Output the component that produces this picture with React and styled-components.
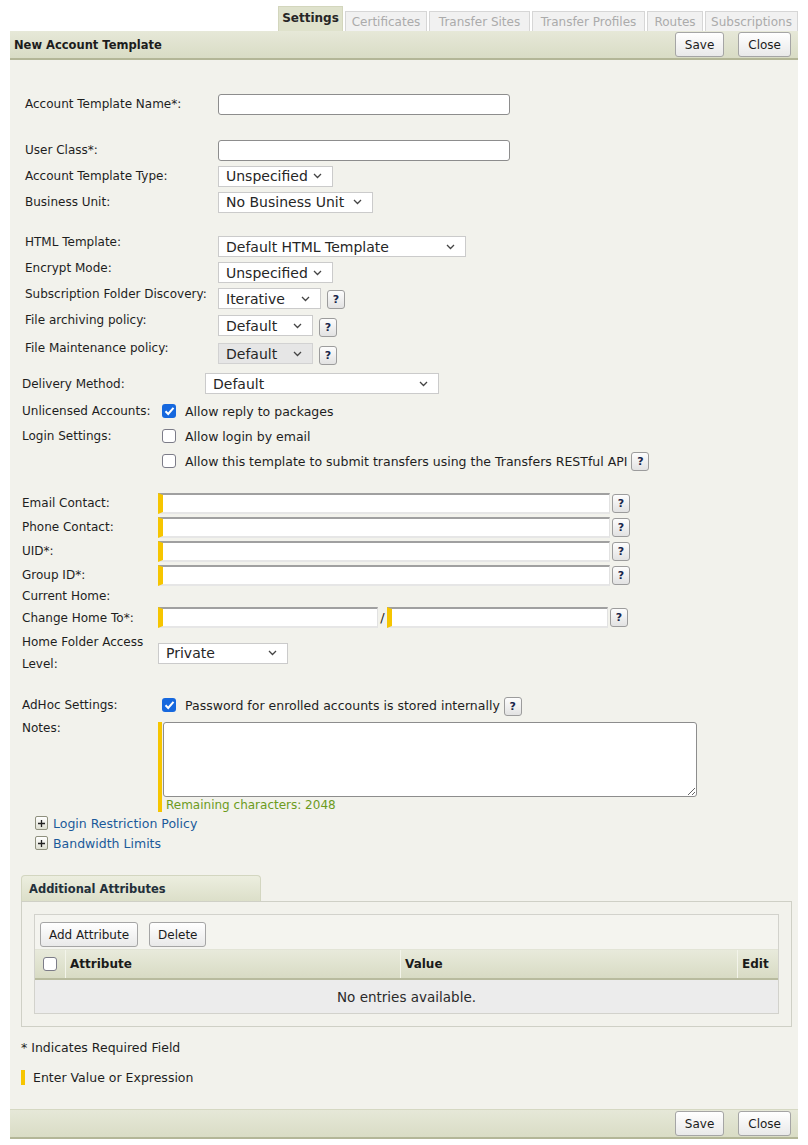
import React from 'react'
import styled, { createGlobalStyle } from 'styled-components'

const GlobalStyle = createGlobalStyle`
  body {
    margin: 0;
    background: #ffffff;
    font-family: "DejaVu Sans", Verdana, sans-serif;
    font-size: 12px;
    color: #1e1e1e;
  }
`

// Shell
const Shell = styled.div`
  width: 788px;
  margin-left: 10px;
`

const TabStrip = styled.div`
  display: flex;
  justify-content: flex-end;
  align-items: flex-end;
  gap: 2px;
  height: 31px;
  padding-top: 6px;
  box-sizing: border-box;
`

const Tab = styled.div`
  box-sizing: border-box;
  display: flex;
  align-items: center;
  justify-content: center;
  width: ${p => p.$w}px;
  height: ${p => (p.$active ? 25 : 20)}px;
  padding-bottom: ${p => (p.$active ? 3 : 0)}px;
  font-size: 12px;
  font-weight: ${p => (p.$active ? 'bold' : 'normal')};
  color: ${p => (p.$active ? '#262626' : '#ababab')};
  background: ${p => (p.$active ? '#dfe2cc' : '#f1f1f1')};
  border: 1px solid ${p => (p.$active ? '#d3d6bd' : '#d6d6d6')};
  border-bottom: none;
  white-space: nowrap;
`

const Sheet = styled.div`
  background: #f2f2ec;
`

const Bar = styled.div`
  display: flex;
  align-items: center;
  height: 27px;
  padding: 0 7px 0 4px;
  background: linear-gradient(#e6e8d8, #d9dcc5);
  border-bottom: 2px solid #b3b697;
  border-top: ${p => (p.$bottom ? '1px solid #d5d8c2' : 'none')};
`

const BarTitle = styled.div`
  flex: 1;
  font-weight: bold;
  font-size: 11.5px;
  color: #1c1c1c;
`

const Button = styled.button`
  height: 25px;
  padding: 0 ${p => p.$pad ?? 9}px;
  margin-left: ${p => p.$gap ?? 0}px;
  font-family: "DejaVu Sans", Verdana, sans-serif;
  font-size: 12px;
  color: #1c1c1c;
  background: linear-gradient(#ffffff, #e9e9e9);
  border: 1px solid #a5a5a5;
  border-radius: 3px;
`

// Form
const Form = styled.div`
  padding: 31px 0 0;
`

const Section = styled.div`
  padding-left: ${p => p.$left}px;
  margin-top: ${p => p.$top ?? 0}px;
`

const Row = styled.div`
  display: grid;
  grid-template-columns: ${p => p.$label}px auto;
  align-items: ${p => p.$align || 'center'};
  height: ${p => p.$h ?? 26}px;
  margin-top: ${p => p.$mt ?? 0}px;
`

const Label = styled.div`
  line-height: ${p => p.$lh ?? 16}px;
  white-space: nowrap;
`

const Controls = styled.div`
  display: flex;
  align-items: center;
  gap: ${p => p.$gap ?? 6}px;
  margin-top: ${p => p.$mt ?? 0}px;
`

const TextInput = styled.div`
  width: ${p => p.$w}px;
  height: 21px;
  box-sizing: border-box;
  background: #fff;
  border: 1px solid #8d8d8d;
  border-radius: 3px;
`

const ExprInput = styled.div`
  width: ${p => p.$w}px;
  height: 21px;
  box-sizing: border-box;
  background: #fff;
  border-left: 5px solid #f6c500;
  border-top: 2px solid #a0a0a0;
  border-right: 1px solid #e2e2e2;
  border-bottom: 2px solid #e6e6e6;
`

const SelectBox = styled.div`
  display: flex;
  align-items: center;
  justify-content: space-between;
  box-sizing: border-box;
  width: ${p => p.$w}px;
  height: 21px;
  padding: 0 10px 0 7px;
  font-size: 14px;
  color: #262626;
  background: ${p => (p.$disabled ? '#e6e6e6' : '#ffffff')};
  border: 1px solid ${p => (p.$disabled ? '#d2d2d2' : '#cbcbcb')};
`

const Chevron = () => (
  <svg width="9" height="6" viewBox="0 0 9 6">
    <path d="M1 1 L4.5 4.5 L8 1" fill="none" stroke="#444" strokeWidth="1.3" />
  </svg>
)

const Select = ({ w, value, disabled }) => (
  <SelectBox $w={w} $disabled={disabled}>
    <span>{value}</span>
    <Chevron />
  </SelectBox>
)

const Help = styled.div`
  display: flex;
  align-items: center;
  justify-content: center;
  width: 18px;
  height: 19px;
  box-sizing: border-box;
  font-size: 11px;
  font-weight: bold;
  color: #17244a;
  background: linear-gradient(#fdfdfd, #e2e2e2);
  border: 1px solid #9c9c9c;
  border-radius: 3px;
  margin-top: ${p => p.$mt ?? 0}px;
  margin-left: ${p => p.$ml ?? 0}px;
`

const CheckBox = styled.span`
  display: inline-flex;
  align-items: center;
  justify-content: center;
  width: 14px;
  height: 14px;
  box-sizing: border-box;
  border-radius: 3px;
  background: ${p => (p.$checked ? '#1668de' : '#ffffff')};
  border: ${p => (p.$checked ? 'none' : '1.5px solid #7c7c88')};
  flex: none;
`

const Check = ({ checked }) => (
  <CheckBox $checked={checked}>
    {checked && (
      <svg width="11" height="10" viewBox="0 0 11 10">
        <path d="M1.5 5.2 L4.2 8 L9.5 1.8" fill="none" stroke="#fff" strokeWidth="2" />
      </svg>
    )}
  </CheckBox>
)

const CheckLine = styled.label`
  display: flex;
  align-items: center;
  gap: 9px;
  font-size: 12.5px;
  white-space: nowrap;
`

const Slash = styled.span`
  width: 9px;
  text-align: center;
  font-size: 13px;
`

const NotesWrap = styled.div`
  border-left: 4px solid #f6c500;
  padding-left: 1px;
  height: 90px;
  margin-top: 2px;
`

const Notes = styled.textarea`
  display: block;
  width: 534px;
  height: 75px;
  box-sizing: border-box;
  border: 1px solid #8d8d8d;
  border-radius: 3px;
  background: #fff;
  resize: both;
`

const Remaining = styled.div`
  color: #6c9b1c;
  font-size: 12px;
  padding: 1px 0 0 3px;
`

const Expander = styled.div`
  display: flex;
  align-items: center;
  gap: 5px;
  height: 20px;
  padding-left: 25px;
  color: #1b5a9a;
  font-size: 12.5px;
`

const PlusBox = styled.span`
  display: inline-flex;
  align-items: center;
  justify-content: center;
  width: 13px;
  height: 14px;
  box-sizing: border-box;
  border: 1px solid #8f907e;
  border-radius: 2px;
  background: linear-gradient(#ffffff, #dedfd2);
`

const Plus = () => (
  <PlusBox>
    <svg width="9" height="9" viewBox="0 0 9 9">
      <path d="M4.5 1 V8 M1 4.5 H8" stroke="#222" strokeWidth="1.3" />
    </svg>
  </PlusBox>
)

// Additional attributes panel
const PanelTab = styled.div`
  margin: 22px 0 0 11px;
  width: 240px;
  height: 26px;
  box-sizing: border-box;
  display: flex;
  align-items: center;
  padding-left: 7px;
  font-weight: bold;
  font-size: 11.5px;
  color: #23303a;
  background: linear-gradient(#eceedf, #dcdfc9);
  border: 1px solid #d3d6c0;
  border-bottom: none;
  border-radius: 4px 4px 0 0;
`

const Panel = styled.div`
  margin-left: 11px;
  width: 771px;
  box-sizing: border-box;
  border: 1px solid #cfd0c6;
  padding: 12px 12px 12px;
`

const Grid = styled.div`
  border: 1px solid #d2d2cc;
  background: #f4f4ef;
`

const Toolbar = styled.div`
  display: flex;
  align-items: flex-end;
  gap: 11px;
  height: 34px;
  padding: 0 0 2px 5px;
  box-sizing: border-box;
`

const HeadRow = styled.div`
  display: grid;
  grid-template-columns: 31px 335px 337px 1fr;
  height: 28px;
  background: linear-gradient(#e8eadb, #d8dbc4);
  border-bottom: 2px solid #b8bb9e;
  border-top: 1px solid #e2e4d6;
`

const HeadCell = styled.div`
  display: flex;
  align-items: center;
  justify-content: ${p => (p.$center ? 'center' : 'flex-start')};
  padding-left: ${p => (p.$center ? 0 : 4)}px;
  font-weight: bold;
  font-size: 12px;
  color: #1a1a1a;
  border-right: ${p => (p.$last ? 'none' : '1px solid #f3f4ea')};
`

const EmptyRow = styled.div`
  height: 33px;
  display: flex;
  align-items: center;
  justify-content: center;
  background: #ececec;
  font-size: 13.5px;
  color: #2a2a2a;
`

const Legend = styled.div`
  display: flex;
  align-items: center;
  gap: 8px;
  height: 16px;
  margin-top: ${p => p.$top}px;
  padding-left: 11px;
  font-size: 12.5px;
`

const YellowMark = styled.span`
  width: 4px;
  height: 15px;
  background: #f6c500;
`

const BottomGap = styled.div`
  height: 24px;
`

const tabs = [
  ['Certificates', 82],
  ['Transfer Sites', 101],
  ['Transfer Profiles', 113],
  ['Routes', 56],
  ['Subscriptions', 93],
]

const Actions = () => (
  <>
    <Button $pad={9}>Save</Button>
    <Button $pad={9} $gap={14}>Close</Button>
  </>
)

const App = () => (
  <>
    <GlobalStyle />
    <Shell>
      <TabStrip>
        <Tab $active $w={65}>Settings</Tab>
        {tabs.map(([t, w]) => (
          <Tab key={t} $w={w}>{t}</Tab>
        ))}
      </TabStrip>
      <Sheet>
        <Bar>
          <BarTitle>New Account Template</BarTitle>
          <Actions />
        </Bar>

        <Form>
          <Section $left={15}>
            <Row $label={193}>
              <Label>Account Template Name*:</Label>
              <TextInput $w={292} />
            </Row>
            <Row $label={193} $mt={20}>
              <Label>User Class*:</Label>
              <TextInput $w={292} />
            </Row>
            <Row $label={193}>
              <Label>Account Template Type:</Label>
              <Select w={115} value="Unspecified" />
            </Row>
            <Row $label={193}>
              <Label>Business Unit:</Label>
              <Select w={155} value="No Business Unit" />
            </Row>
          </Section>

          <Section $left={15} $top={19}>
            <Row $label={193} $align="start">
              <Label>HTML Template:</Label>
              <Controls $mt={2}>
                <Select w={248} value="Default HTML Template" />
              </Controls>
            </Row>
            <Row $label={193} $align="start">
              <Label>Encrypt Mode:</Label>
              <Controls $mt={2}>
                <Select w={115} value="Unspecified" />
              </Controls>
            </Row>
            <Row $label={193} $align="start">
              <Label>Subscription Folder Discovery:</Label>
              <Controls $mt={2}>
                <Select w={103} value="Iterative" />
                <Help $mt={1}>?</Help>
              </Controls>
            </Row>
            <Row $label={193} $align="start" $h={28}>
              <Label>File archiving policy:</Label>
              <Controls $mt={2}>
                <Select w={95} value="Default" />
                <Help $mt={4}>?</Help>
              </Controls>
            </Row>
            <Row $label={193} $align="start">
              <Label>File Maintenance policy:</Label>
              <Controls $mt={2}>
                <Select w={95} value="Default" disabled />
                <Help $mt={4}>?</Help>
              </Controls>
            </Row>
          </Section>

          <Section $left={12} $top={3}>
            <Row $label={183} $h={29}>
              <Label>Delivery Method:</Label>
              <Select w={234} value="Default" />
            </Row>
            <Row $label={140}>
              <Label>Unlicensed Accounts:</Label>
              <CheckLine>
                <Check checked />
                Allow reply to packages
              </CheckLine>
            </Row>
            <Row $label={140} $h={24}>
              <Label>Login Settings:</Label>
              <CheckLine>
                <Check />
                Allow login by email
              </CheckLine>
            </Row>
            <Row $label={140}>
              <Label />
              <Controls $gap={4}>
                <CheckLine>
                  <Check />
                  Allow this template to submit transfers using the Transfers RESTful API
                </CheckLine>
                <Help>?</Help>
              </Controls>
            </Row>
          </Section>

          <Section $left={12} $top={17}>
            {['Email Contact:', 'Phone Contact:', 'UID*:', 'Group ID*:'].map(l => (
              <Row key={l} $label={136} $h={24}>
                <Label>{l}</Label>
                <Controls $gap={2}>
                  <ExprInput $w={452} />
                  <Help>?</Help>
                </Controls>
              </Row>
            ))}
            <Row $label={136} $h={17}>
              <Label>Current Home:</Label>
              <span />
            </Row>
            <Row $label={136} $h={27}>
              <Label>Change Home To*:</Label>
              <Controls $gap={0}>
                <ExprInput $w={220} />
                <Slash>/</Slash>
                <ExprInput $w={221} />
                <Help $ml={2}>?</Help>
              </Controls>
            </Row>
            <Row $label={136} $h={44}>
              <Label $lh={22}>
                Home Folder Access
                <br />
                Level:
              </Label>
              <Select w={130} value="Private" />
            </Row>

            <Row $label={140} $h={30} $mt={15}>
              <Label>AdHoc Settings:</Label>
              <Controls $gap={4}>
                <CheckLine>
                  <Check checked />
                  Password for enrolled accounts is stored internally
                </CheckLine>
                <Help $mt={2}>?</Help>
              </Controls>
            </Row>
            <Row $label={136} $h={92} $align="start">
              <Label>Notes:</Label>
              <NotesWrap>
                <Notes />
                <Remaining>Remaining characters: 2048</Remaining>
              </NotesWrap>
            </Row>
          </Section>

          <Section $left={0} $top={1}>
            <Expander>
              <Plus />
              Login Restriction Policy
            </Expander>
            <Expander>
              <Plus />
              Bandwidth Limits
            </Expander>
          </Section>

          <PanelTab>Additional Attributes</PanelTab>
          <Panel>
            <Grid>
              <Toolbar>
                <Button $pad={8}>Add Attribute</Button>
                <Button $pad={8}>Delete</Button>
              </Toolbar>
              <HeadRow>
                <HeadCell $center>
                  <Check />
                </HeadCell>
                <HeadCell>Attribute</HeadCell>
                <HeadCell>Value</HeadCell>
                <HeadCell $last>Edit</HeadCell>
              </HeadRow>
              <EmptyRow>No entries available.</EmptyRow>
            </Grid>
          </Panel>

          <Legend $top={12}>* Indicates Required Field</Legend>
          <Legend $top={14}>
            <YellowMark />
            Enter Value or Expression
          </Legend>
          <BottomGap />
        </Form>

        <Bar $bottom>
          <BarTitle />
          <Actions />
        </Bar>
      </Sheet>
    </Shell>
  </>
)

export default App
